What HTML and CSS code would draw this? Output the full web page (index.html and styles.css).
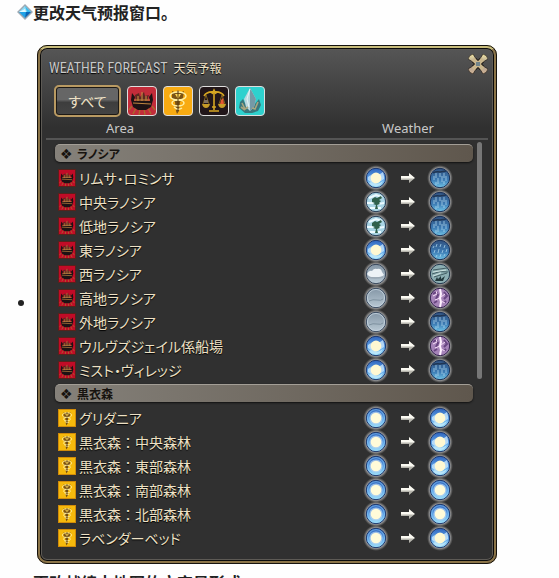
FILE: index.html
```
<!DOCTYPE html>
<html lang="zh-CN">

<head>
    <meta charset="UTF-8">
    <meta name="viewport" content="width=device-width, initial-scale=1.0">
    <title>更改天气预报窗口</title>
    <link rel="stylesheet" href="styles.css">
</head>

<body>
    <!-- icon sprite -->
    <svg class="sprite" aria-hidden="true">
        <defs>
            <linearGradient id="sky" x1="0" y1="0" x2="0" y2="1">
                <stop offset="0" stop-color="#2f64bd" />
                <stop offset=".55" stop-color="#5fa5ea" />
                <stop offset="1" stop-color="#a5e6fb" />
            </linearGradient>
            <linearGradient id="wet" x1="0" y1="0" x2="0" y2="1">
                <stop offset="0" stop-color="#31517f" />
                <stop offset=".6" stop-color="#3c7bb4" />
                <stop offset="1" stop-color="#72c5e8" />
            </linearGradient>
            <linearGradient id="grey" x1="0" y1="0" x2="0" y2="1">
                <stop offset="0" stop-color="#8496a6" />
                <stop offset="1" stop-color="#b9c9d4" />
            </linearGradient>
            <radialGradient id="halo">
                <stop offset=".78" stop-color="#bbb" stop-opacity=".8" />
                <stop offset="1" stop-color="#888" stop-opacity="0" />
            </radialGradient>
            <linearGradient id="metal" x1="0" y1="0" x2="0" y2="1">
                <stop offset="0" stop-color="#f3e6a6" />
                <stop offset=".5" stop-color="#a7998c" />
                <stop offset="1" stop-color="#d3b596" />
            </linearGradient>
            <linearGradient id="arrow-fill" x1="0" y1="0" x2="0" y2="1">
                <stop offset=".5" stop-color="#fbfaf2" />
                <stop offset=".6" stop-color="#b5b4ac" />
            </linearGradient>
        </defs>

        <symbol id="clear" viewBox="-1 -1 26 26">
            <circle cx="12" cy="12" r="13" fill="url(#halo)" />
            <circle cx="12" cy="12" r="9.7" fill="url(#sky)" stroke="#1c376c" />
            <circle cx="12" cy="12" r="8.4" fill="none" stroke="#8fd0f5" stroke-width=".8" opacity=".7" />
            <circle cx="12" cy="12" r="6.6" fill="#b9d4ef" opacity=".7" />
            <circle cx="12" cy="12" r="5.3" fill="#fffbd9" />
        </symbol>
        <symbol id="fair" viewBox="-1 -1 26 26">
            <circle cx="12" cy="12" r="13" fill="url(#halo)" />
            <circle cx="12" cy="12" r="9.7" fill="url(#sky)" stroke="#1c376c" />
            <path d="M4 11q2-2 4-2l8-1 3-2 1 4v3l-3 2-10 1-3-2z" fill="#c9e6fb" opacity=".8" />
            <path d="M5 17q3-2 6 0t8-2q-2 5-7 5-5 0-7-3z" fill="#d9f4fe" opacity=".6" />
            <circle cx="12" cy="12" r="5.4" fill="#fff8d2" />
        </symbol>
        <symbol id="wind" viewBox="-1 -1 26 26">
            <circle cx="12" cy="12" r="13" fill="url(#halo)" />
            <circle cx="12" cy="12" r="9.7" fill="#aad5e5" stroke="#253b55" />
            <path d="M5 8l7-3 6 2M3 13h7M14 14l6-1M6 18h11" stroke="#ecfaff" stroke-width="2" fill="none" />
            <path d="M8 9l3-2 2 1 4-2 1 2-3 2 2 1-2 2 1 1-3 1 1 4h-3l1-4-3-1 2-1-3-1z" fill="#2f604c" />
        </symbol>
        <symbol id="cloud" viewBox="-1 -1 26 26">
            <circle cx="12" cy="12" r="13" fill="url(#halo)" />
            <circle cx="12" cy="12" r="9.7" fill="url(#grey)" stroke="#37465a" />
            <path d="M3 12q2-4 5-3 2-3 5-2 4-1 5 3l2 3-3 2H6z" fill="#edf2f6" />
            <path d="M4 15q7 2 15 0" fill="none" stroke="#9ba8b4" stroke-width="1.5" />
        </symbol>
        <symbol id="fog" viewBox="-1 -1 26 26">
            <circle cx="12" cy="12" r="13" fill="url(#halo)" />
            <circle cx="12" cy="12" r="9.7" fill="url(#grey)" stroke="#3a4b61" />
            <circle cx="12" cy="12" r="8.6" fill="none" stroke="#c7d5df" stroke-width=".8" />
            <path d="M5 15q4-2 8-1t6-1" fill="none" stroke="#7d919f" />
        </symbol>
        <symbol id="rain" viewBox="-1 -1 26 26">
            <circle cx="12" cy="12" r="13" fill="url(#halo)" />
            <circle cx="12" cy="12" r="9.7" fill="url(#wet)" stroke="#182f56" />
            <path d="M5 7q3-2 7-1l6-1" fill="none" stroke="#203552" stroke-width="1.5" />
            <path d="M6 10v4M8 7v5M10 12v6M12 7v4M14 10v6M16 7v5M18 10v5M8 16v3M16 15v3" stroke="#b5dcf0" stroke-width=".9" opacity=".8" />
        </symbol>
        <symbol id="shower" viewBox="-1 -1 26 26">
            <circle cx="12" cy="12" r="13" fill="url(#halo)" />
            <circle cx="12" cy="12" r="9.7" fill="url(#wet)" stroke="#182f56" />
            <path d="M6 8l-1 2M9 6l-1 3M13 6l-1 3M17 7l-1 3M7 12l-1 3M11 11l-1 4M15 12l-1 3M19 11l-1 3M9 17l-1 2M13 16l-1 3M17 16l-1 2" stroke="#b5dcf0" stroke-width=".9" opacity=".8" />
        </symbol>
        <symbol id="gale" viewBox="-1 -1 26 26">
            <circle cx="12" cy="12" r="13" fill="url(#halo)" />
            <circle cx="12" cy="12" r="9.7" fill="#8caeb2" stroke="#20364b" />
            <path d="M5 8l14-2M4 12q8-4 16-2M6 15l13-4" stroke="#445f65" fill="none" />
            <path d="M5 10l13-2M5 14l8-3" stroke="#cfe4e2" fill="none" />
            <path d="M7 19l2-4 1 2 3-3v3l4-3-2 5z" fill="#233a3e" />
        </symbol>
        <symbol id="thunder" viewBox="-1 -1 26 26">
            <circle cx="12" cy="12" r="13" fill="url(#halo)" />
            <circle cx="12" cy="12" r="9.7" fill="#a583b8" stroke="#33214d" />
            <path d="M5 8l3-2 2 3-2 4M16 6l3 4-3 3M6 17l3-2M16 17l2-2" stroke="#684581" stroke-width="2" fill="none" />
            <path d="M12 3l1 5-1 4 1 4-1 5" stroke="#fff2ff" stroke-width="2" fill="none" />
            <path d="M13 11l4-3M12 12l-5 2M13 15l4 2M8 5l1 3-4 2" stroke="#f6def7" fill="none" />
        </symbol>

        <symbol id="arrow" viewBox="0 0 14 10">
            <path d="M0 3h8V0l6 5-6 5V7H0z" fill="url(#arrow-fill)" />
        </symbol>

        <!-- city emblems -->
        <symbol id="ship" viewBox="0 0 28 28">
            <path d="M4 19l-3 4M8 21l-3 6M12 22l-1 6M16 22l1 6M20 21l3 6M24 19l3 4" stroke="#a96a2e" stroke-width="1.4" />
            <path d="M4 6l3 4-1 4h16l-1-4 3-4 1 7-2 7-5 3h-8l-5-3-2-7z" fill="#1d1214" />
            <path d="M7 8l4-2 1 4 4-5 1 4 4-1-2 6H8z" fill="#5b2820" />
            <path d="M6 13h16M10 9v5M14 5v9M18 9v5M5 16l18 1" stroke="#be8440" stroke-width="1.2" />
        </symbol>
        <symbol id="serpent" viewBox="0 0 28 28">
            <path d="M8 4l4 2 2-3 2 3 4-2-1 7-3 4-1 9-2 3-1-3-1-9-3-4z" fill="#7b5315" />
            <path d="M11 7h6l-3 5z" fill="#ffd857" />
            <ellipse cx="14" cy="9" rx="8" ry="4" fill="none" stroke="#fff0a2" stroke-width="1.5" />
            <ellipse cx="14" cy="16" rx="6" ry="3" fill="none" stroke="#fff0a2" stroke-width="1.5" />
            <path d="M10 20q4 4 8 1" fill="none" stroke="#fff0a2" stroke-width="1.5" />
            <path d="M14 4v20" stroke="#593b12" stroke-width="1" />
        </symbol>
        <symbol id="scales" viewBox="0 0 28 28">
            <path d="M14 3v20M9 24h10M4 9q3-5 10-4 7-1 10 4M12 7l2-4 2 4M12 20h4" fill="none" stroke="#d6a722" stroke-width="1.6" />
            <path d="M6 8l-3 9M6 8l3 9M22 8l-3 9M22 8l3 9" stroke="#96731e" stroke-width=".8" />
            <path d="M2 17h8q-1 4-4 4t-4-4zM18 17h8q-1 4-4 4t-4-4z" fill="#c79b27" />
            <path d="M4 13h4v3H4z" fill="#80705d" />
            <path d="M20 17l1-4 2-2 1 6z" fill="#e4572f" />
        </symbol>
        <symbol id="crystal" viewBox="0 0 28 28">
            <path d="M4 15l3-3 2 4 10 1 4-5 2 6-3 6-6 2H9l-6-5z" fill="#39777d" />
            <path d="M14 1l6 11-2 8-4 4-4-4-2-8z" fill="#bbd8df" />
            <path d="M14 1l6 11-2 8-4 4z" fill="#7599a6" />
            <path d="M14 2l-3 10 2 8" stroke="#e6f5f6" stroke-width="1" fill="none" />
            <path d="M6 16l3 6 3-2M22 15l-3 7-3-1M5 20l4 3" stroke="#a9a67f" stroke-width="1.6" fill="none" />
        </symbol>
    </svg>

    <p class="note">
        <svg class="gem" viewBox="0 0 16 16" aria-hidden="true">
            <path d="M8 0l8 8-8 8-8-8z" fill="#9da9b3" />
            <path d="M8 2l6 6H2z" fill="#8eddf8" />
            <path d="M8 2l2 6 4 0z" fill="#38b9ec" />
            <path d="M2 8h8l-2 6z" fill="#20a2e6" />
            <path d="M14 8h-5l-1 6z" fill="#0965b6" />
            <path d="M2 8l6-3 1 3z" fill="#e2faff" />
        </svg>更改天气预报窗口。
    </p>

    <ul class="shots">
        <li>
            <section class="window" lang="ja">
                <header class="titlebar">
                    <h1>WEATHER FORECAST</h1>
                    <span class="subtitle">天気予報</span>
                    <button class="close" type="button" aria-label="Close">
                        <svg viewBox="0 0 20 20">
                            <path d="M6 6l8 8M14 6l-8 8" stroke="#17130f" stroke-width="6" />
                            <path d="M5 0l3 5-3 3-5-3q1-4 5-5zM15 0l-3 5 3 3 5-3q-1-4-5-5zM5 20l3-5-3-3-5 3q1 4 5 5zM15 20l-3-5 3-3 5 3q-1 4-5 5z" fill="url(#metal)" stroke="#17130f" stroke-width=".6" />
                            <path d="M5 5l10 10M15 5L5 15" stroke="#c9b68d" stroke-width="4" />
                            <path d="M8 8h4v4H8z" fill="#71848a" />
                        </svg>
                    </button>
                </header>

                <nav class="filters">
                    <button class="all" type="button">すべて</button>
                    <button class="city red" type="button" aria-label="ラノシア"><svg><use href="#ship" /></svg></button>
                    <button class="city yellow" type="button" aria-label="黒衣森"><svg><use href="#serpent" /></svg></button>
                    <button class="city dark" type="button" aria-label="ザナラーン"><svg><use href="#scales" /></svg></button>
                    <button class="city teal" type="button" aria-label="その他"><svg><use href="#crystal" /></svg></button>
                </nav>

                <div class="list">
                    <table>
                        <colgroup>
                            <col>
                            <col class="slot">
                            <col class="slot">
                            <col class="slot">
                            <col class="slot">
                        </colgroup>
                        <thead>
                            <tr>
                                <th class="area-head">Area</th>
                                <th colspan="3">Weather</th>
                                <th></th>
                            </tr>
                        </thead>
                        <tbody class="noscea">
                            <tr class="region">
                                <th colspan="5"><div><span>❖</span>ラノシア</div></th>
                            </tr>
                            <tr>
                                <td><svg class="flag"><use href="#ship" /></svg>リムサ・ロミンサ</td>
                                <td><svg class="sky"><use href="#fair" /></svg></td>
                                <td><svg class="to"><use href="#arrow" /></svg></td>
                                <td><svg class="sky"><use href="#rain" /></svg></td>
                            </tr>
                            <tr>
                                <td><svg class="flag"><use href="#ship" /></svg>中央ラノシア</td>
                                <td><svg class="sky"><use href="#wind" /></svg></td>
                                <td><svg class="to"><use href="#arrow" /></svg></td>
                                <td><svg class="sky"><use href="#rain" /></svg></td>
                            </tr>
                            <tr>
                                <td><svg class="flag"><use href="#ship" /></svg>低地ラノシア</td>
                                <td><svg class="sky"><use href="#wind" /></svg></td>
                                <td><svg class="to"><use href="#arrow" /></svg></td>
                                <td><svg class="sky"><use href="#rain" /></svg></td>
                            </tr>
                            <tr>
                                <td><svg class="flag"><use href="#ship" /></svg>東ラノシア</td>
                                <td><svg class="sky"><use href="#fair" /></svg></td>
                                <td><svg class="to"><use href="#arrow" /></svg></td>
                                <td><svg class="sky"><use href="#shower" /></svg></td>
                            </tr>
                            <tr>
                                <td><svg class="flag"><use href="#ship" /></svg>西ラノシア</td>
                                <td><svg class="sky"><use href="#cloud" /></svg></td>
                                <td><svg class="to"><use href="#arrow" /></svg></td>
                                <td><svg class="sky"><use href="#gale" /></svg></td>
                            </tr>
                            <tr>
                                <td><svg class="flag"><use href="#ship" /></svg>高地ラノシア</td>
                                <td><svg class="sky"><use href="#fog" /></svg></td>
                                <td><svg class="to"><use href="#arrow" /></svg></td>
                                <td><svg class="sky"><use href="#thunder" /></svg></td>
                            </tr>
                            <tr>
                                <td><svg class="flag"><use href="#ship" /></svg>外地ラノシア</td>
                                <td><svg class="sky"><use href="#fog" /></svg></td>
                                <td><svg class="to"><use href="#arrow" /></svg></td>
                                <td><svg class="sky"><use href="#rain" /></svg></td>
                            </tr>
                            <tr>
                                <td><svg class="flag"><use href="#ship" /></svg>ウルヴズジェイル係船場</td>
                                <td><svg class="sky"><use href="#fair" /></svg></td>
                                <td><svg class="to"><use href="#arrow" /></svg></td>
                                <td><svg class="sky"><use href="#thunder" /></svg></td>
                            </tr>
                            <tr>
                                <td><svg class="flag"><use href="#ship" /></svg>ミスト・ヴィレッジ</td>
                                <td><svg class="sky"><use href="#fair" /></svg></td>
                                <td><svg class="to"><use href="#arrow" /></svg></td>
                                <td><svg class="sky"><use href="#rain" /></svg></td>
                            </tr>
                        </tbody>
                        <tbody class="shroud">
                            <tr class="region">
                                <th colspan="5"><div><span>❖</span>黒衣森</div></th>
                            </tr>
                            <tr>
                                <td><svg class="flag"><use href="#serpent" /></svg>グリダニア</td>
                                <td><svg class="sky"><use href="#clear" /></svg></td>
                                <td><svg class="to"><use href="#arrow" /></svg></td>
                                <td><svg class="sky"><use href="#fair" /></svg></td>
                            </tr>
                            <tr class="kanji">
                                <td><svg class="flag"><use href="#serpent" /></svg>黒衣森：中央森林</td>
                                <td><svg class="sky"><use href="#clear" /></svg></td>
                                <td><svg class="to"><use href="#arrow" /></svg></td>
                                <td><svg class="sky"><use href="#fair" /></svg></td>
                            </tr>
                            <tr class="kanji">
                                <td><svg class="flag"><use href="#serpent" /></svg>黒衣森：東部森林</td>
                                <td><svg class="sky"><use href="#clear" /></svg></td>
                                <td><svg class="to"><use href="#arrow" /></svg></td>
                                <td><svg class="sky"><use href="#fair" /></svg></td>
                            </tr>
                            <tr class="kanji">
                                <td><svg class="flag"><use href="#serpent" /></svg>黒衣森：南部森林</td>
                                <td><svg class="sky"><use href="#clear" /></svg></td>
                                <td><svg class="to"><use href="#arrow" /></svg></td>
                                <td><svg class="sky"><use href="#clear" /></svg></td>
                            </tr>
                            <tr class="kanji">
                                <td><svg class="flag"><use href="#serpent" /></svg>黒衣森：北部森林</td>
                                <td><svg class="sky"><use href="#clear" /></svg></td>
                                <td><svg class="to"><use href="#arrow" /></svg></td>
                                <td><svg class="sky"><use href="#clear" /></svg></td>
                            </tr>
                            <tr>
                                <td><svg class="flag"><use href="#serpent" /></svg>ラベンダーベッド</td>
                                <td><svg class="sky"><use href="#clear" /></svg></td>
                                <td><svg class="to"><use href="#arrow" /></svg></td>
                                <td><svg class="sky"><use href="#fair" /></svg></td>
                            </tr>
                        </tbody>
                    </table>
                    <div class="thumb"></div>
                </div>
            </section>
        </li>
    </ul>

    <p class="note next">更改战绩中地图的文字显形式</p>
</body>

</html>
```
FILE: styles.css
```
* {
    box-sizing: border-box;
}

body {
    margin: 0;
    height: 100vh;
    overflow: hidden;
    background-color: #fefefe;
    color: #222;
    font-family: "Noto Sans CJK SC", sans-serif;
    font-size: 16px;
}

.sprite {
    position: absolute;
    width: 0;
    height: 0;
}

.note {
    display: flex;
    align-items: center;
    margin: 0;
    padding-left: 17px;
    font-weight: bold;
    line-height: 24px;
}

.note.next {
    padding-left: 33px;
    padding-top: 6px;
}

.gem {
    width: 16px;
    height: 16px;
}

.shots {
    margin: 21px 0 0;
    padding: 0 62px 0 37px;
    line-height: 0;
}

/* game window */
.window {
    display: inline-block;
    vertical-align: middle;
    width: 100%;
    padding: 4px 6px 11px;
    border: 3px solid #8b7448;
    border-top-color: #c9bd7c;
    border-radius: 10px;
    outline: 1px solid #15120e;
    outline-offset: -1px;
    background: linear-gradient(#565656, #303030 80px);
    box-shadow: inset 0 0 0 1px #0b0b0b, inset 0 0 0 2px #5d5a55;
    color: #eee1c5;
    font-family: "Noto Sans CJK JP", sans-serif;
    line-height: 24px;
}

.titlebar {
    display: flex;
    align-items: baseline;
    gap: 6px;
    height: 33px;
    padding-left: 3px;
}

h1 {
    margin: 0;
    color: #c9c9c9;
    font-family: "Roboto Condensed", Roboto, sans-serif;
    font-size: 14px;
    font-weight: normal;
    line-height: 32px;
    text-shadow: 0 1px 1px #000;
}

.subtitle {
    font-size: 12px;
    text-shadow: 0 1px 1px #000;
}

button {
    padding: 0;
    border: 0;
    font: inherit;
    color: inherit;
}

.close {
    align-self: flex-start;
    width: 20px;
    height: 20px;
    margin-left: auto;
    margin-top: 2px;
    background: none;
}

.close svg,
.city svg {
    display: block;
    width: 100%;
    height: 100%;
}

.filters {
    display: flex;
    align-items: center;
    gap: 6px;
    padding-left: 8px;
}

.all {
    width: 67px;
    height: 32px;
    border: 2px solid #b99a62;
    border-radius: 5px;
    background: linear-gradient(#666 45%, #3d3d3d 55%, #444);
    box-shadow: inset 0 0 0 1px #1d1915;
    font-size: 14px;
    font-feature-settings: "palt";
}

.city {
    width: 30px;
    height: 30px;
    border: 1px solid #dedede;
    border-radius: 4px;
}

.red {
    background: #c32c3a;
}

.yellow {
    background: #f8ab12;
}

.dark {
    background: #211619;
}

.teal {
    background: #2ed1ce;
}

/* forecast list */
.list {
    position: relative;
}

table {
    width: 100%;
    border-collapse: collapse;
    table-layout: fixed;
}

.slot {
    width: 32px;
}

th,
td {
    height: 24px;
    padding: 0;
    text-align: center;
    white-space: nowrap;
}

thead th {
    border-bottom: 2px solid #555;
    color: #c9c9c9;
    font-family: "Noto Sans", sans-serif;
    font-size: 13px;
    font-weight: normal;
    line-height: 20px;
    height: 22px;
}

thead .area-head {
    padding-left: 60px;
    text-align: left;
}

td:first-child {
    padding-left: 12px;
    text-align: left;
    font-size: 14px;
    font-feature-settings: "palt";
    text-shadow: 0 1px 1px #000;
}

.kanji td:first-child {
    font-feature-settings: normal;
}

td svg {
    display: block;
    margin: 0 auto;
}

.flag {
    display: inline-block;
    vertical-align: top;
    width: 18px;
    height: 18px;
    margin: 3px 3px 0 0;
    border: 1px solid #59211b;
}

.noscea .flag {
    background: #c20b27;
}

.shroud .flag {
    background: #f5b90c;
    border-color: #d18b09;
}

.sky {
    width: 26px;
    height: 26px;
    margin: -1px auto;
}

.to {
    width: 14px;
    height: 10px;
}

.region div {
    display: flex;
    align-items: center;
    gap: 5px;
    height: 18px;
    margin: 2px 15px 4px 9px;
    padding-left: 5px;
    border-top: 1px solid #a39e96;
    border-radius: 5px;
    background: linear-gradient(90deg, #85817a, #5f574d);
    box-shadow: 0 1px 2px #111;
    color: #17130f;
    font-size: 12px;
    font-feature-settings: "palt";
}

.noscea .region th {
    padding-top: 2px;
}

.region span {
    width: 12px;
    font-family: "DejaVu Sans", sans-serif;
    font-size: 14px;
    font-weight: normal;
}

/* scrollbar thumb, over the right edge of the table */
.thumb {
    position: absolute;
    top: 25px;
    right: 6px;
    width: 5px;
    height: 237px;
    border-radius: 3px;
    background: #777;
}
```
